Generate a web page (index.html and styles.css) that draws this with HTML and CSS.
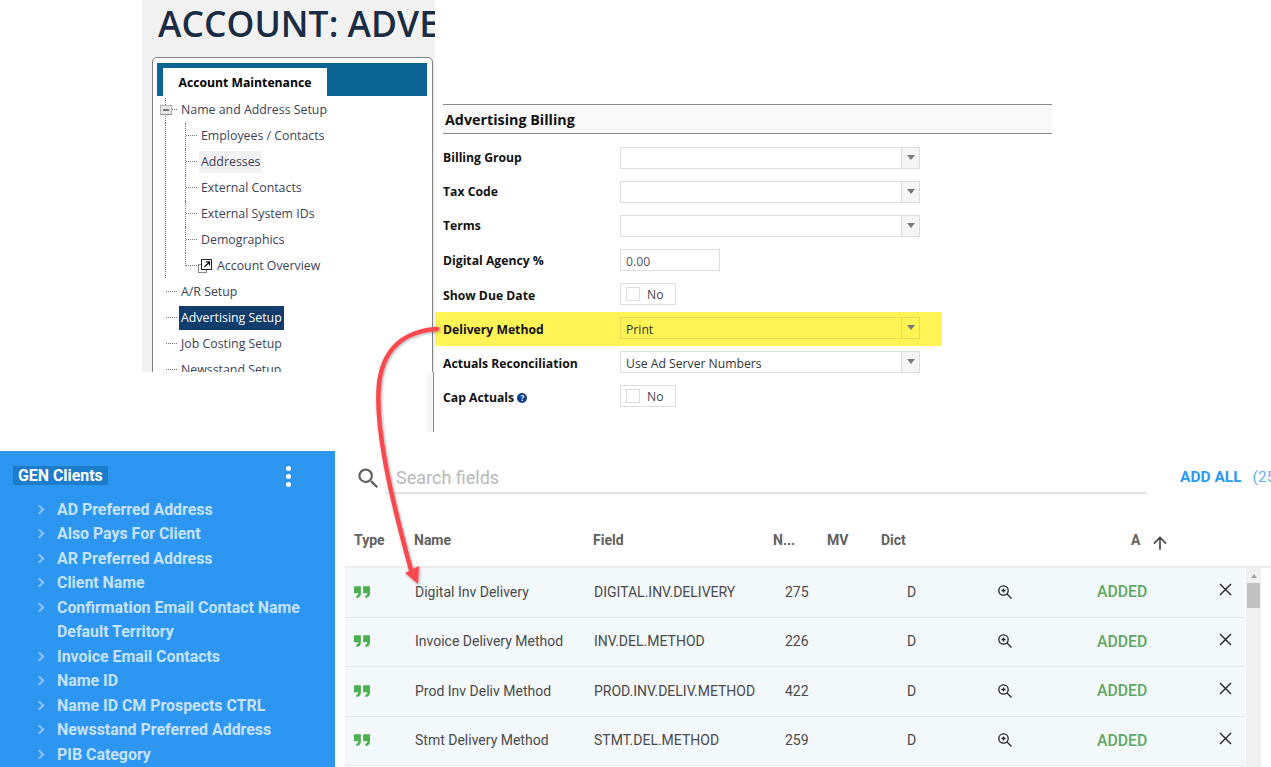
FILE: index.html
```html
<!DOCTYPE html>
<html lang="en">

<head>
    <meta charset="UTF-8">
    <title>Account: Advertising Setup</title>
    <link rel="stylesheet" href="styles.css">
</head>

<body>
    <!-- old account screen, top left of the collage -->
    <section class="account-shot">
        <h1 class="account-title">ACCOUNT: ADVERTISING</h1>
        <div class="tree-panel">
            <div class="tab-bar"><span class="tab">Account Maintenance</span></div>
            <ul class="tree">
                <li class="root open"><span class="expander"></span><a>Name and Address Setup</a></li>
                <li class="leaf"><a>Employees / Contacts</a></li>
                <li class="leaf"><a class="hover">Addresses</a></li>
                <li class="leaf"><a>External Contacts</a></li>
                <li class="leaf"><a>External System IDs</a></li>
                <li class="leaf"><a>Demographics</a></li>
                <li class="leaf last">
                    <svg class="popout" width="14" height="14" viewBox="0 0 14 14">
                        <rect x="0.5" y="5.5" width="8" height="8" fill="#fff" stroke="#888" />
                        <rect x="3.5" y="0.5" width="10" height="10" fill="#fff" stroke="#222" />
                        <path d="M6.5 8l4.5-4.5M7.8 2.8h3.7v3.7" fill="none" stroke="#111" stroke-width="1.2" />
                    </svg>
                    <a>Account Overview</a>
                </li>
                <li class="root"><a>A/R Setup</a></li>
                <li class="root"><a class="selected">Advertising Setup</a></li>
                <li class="root"><a>Job Costing Setup</a></li>
                <li class="root"><a>Newsstand Setup</a></li>
            </ul>
        </div>
    </section>

    <section class="billing-form">
        <h2 class="form-title">Advertising Billing</h2>
        <div class="form-row upper">
            <label>Billing Group</label>
            <div class="select"><span></span><i></i></div>
        </div>
        <div class="form-row upper">
            <label>Tax Code</label>
            <div class="select"><span></span><i></i></div>
        </div>
        <div class="form-row upper">
            <label>Terms</label>
            <div class="select"><span></span><i></i></div>
        </div>
        <div class="form-row">
            <label>Digital Agency %</label>
            <div class="number-input">0.00</div>
        </div>
        <div class="form-row lower">
            <label>Show Due Date</label>
            <div class="toggle"><b></b>No</div>
        </div>
        <div class="form-row lower highlight">
            <label>Delivery Method</label>
            <div class="select"><span>Print</span><i></i></div>
        </div>
        <div class="form-row lower">
            <label>Actuals Reconciliation</label>
            <div class="select"><span>Use Ad Server Numbers</span><i></i></div>
        </div>
        <div class="form-row lower">
            <label>Cap Actuals <em class="help">?</em></label>
            <div class="toggle"><b></b>No</div>
        </div>
    </section>
    <div class="pane-stub"></div>

    <!-- blue field tree -->
    <aside class="field-tree">
        <div class="field-head">
            <span class="field-group">GEN Clients</span>
            <span class="kebab"><i></i><i></i><i></i></span>
        </div>
        <ul class="field-list">
            <li class="has-kids">AD Preferred Address</li>
            <li class="has-kids">Also Pays For Client</li>
            <li class="has-kids">AR Preferred Address</li>
            <li class="has-kids">Client Name</li>
            <li class="has-kids">Confirmation Email Contact Name</li>
            <li>Default Territory</li>
            <li class="has-kids">Invoice Email Contacts</li>
            <li class="has-kids">Name ID</li>
            <li class="has-kids">Name ID CM Prospects CTRL</li>
            <li class="has-kids">Newsstand Preferred Address</li>
            <li class="has-kids">PIB Category</li>
        </ul>
    </aside>

    <!-- field picker -->
    <main class="picker">
        <div class="search-bar">
            <svg class="search-icon" width="27" height="27" viewBox="0 0 24 24">
                <path fill="#616161" d="M15.5 14h-.79l-.28-.27A6.47 6.47 0 0 0 16 9.5 6.5 6.5 0 1 0 9.5 16c1.61 0 3.09-.59 4.23-1.57l.27.28v.79l5 4.99L20.49 19l-4.99-5zm-6 0C7.01 14 5 11.99 5 9.5S7.01 5 9.5 5 14 7.01 14 9.5 11.99 14 9.5 14z" />
            </svg>
            <div class="search-field">Search fields</div>
            <div class="add-all"><b>ADD ALL</b><span>(25)</span></div>
        </div>

        <div class="grid-row grid-head">
            <span>Type</span>
            <span>Name</span>
            <span>Field</span>
            <span>N...</span>
            <span>MV</span>
            <span>Dict</span>
            <span></span>
            <span class="sort-col">A
                <svg width="20" height="20" viewBox="0 0 24 24">
                    <path fill="#444" d="M4 12l1.41 1.41L11 7.83V20h2V7.83l5.58 5.59L20 12l-8-8-8 8z" />
                </svg>
            </span>
        </div>

        <div class="grid-body">
            <div class="grid-rows">
                <div class="grid-row">
                    <svg class="quote" width="16" height="12" viewBox="5 7 14 10"><path d="M5.6 7H11v6.5c0 2-1.5 3.6-4 3.8v-2.1c1 0 1.6-.7 1.7-2H5.6a.6.6 0 0 1-.6-.6V7.6a.6.6 0 0 1 .6-.6zM13.6 7H19v6.5c0 2-1.5 3.6-4 3.8v-2.1c1 0 1.6-.7 1.7-2h-3.1a.6.6 0 0 1-.6-.6V7.6a.6.6 0 0 1 .6-.6z" /></svg>
                    <span class="name">Digital Inv Delivery</span>
                    <span class="name">DIGITAL.INV.DELIVERY</span>
                    <span class="num">275</span>
                    <span></span>
                    <span class="dict">D</span>
                    <svg class="zoom" width="16" height="16" viewBox="0 0 16 16"><circle cx="6.5" cy="6.5" r="4.7" /><path d="M10 10l4.5 4.5M4.5 6.5h4M6.5 4.5v4" /></svg>
                    <span class="added">ADDED</span>
                    <svg class="remove" width="13" height="13" viewBox="0 0 13 13"><path d="M1 1l11 11M12 1L1 12" /></svg>
                </div>
                <div class="grid-row">
                    <svg class="quote" width="16" height="12" viewBox="5 7 14 10"><path d="M5.6 7H11v6.5c0 2-1.5 3.6-4 3.8v-2.1c1 0 1.6-.7 1.7-2H5.6a.6.6 0 0 1-.6-.6V7.6a.6.6 0 0 1 .6-.6zM13.6 7H19v6.5c0 2-1.5 3.6-4 3.8v-2.1c1 0 1.6-.7 1.7-2h-3.1a.6.6 0 0 1-.6-.6V7.6a.6.6 0 0 1 .6-.6z" /></svg>
                    <span class="name">Invoice Delivery Method</span>
                    <span class="name">INV.DEL.METHOD</span>
                    <span class="num">226</span>
                    <span></span>
                    <span class="dict">D</span>
                    <svg class="zoom" width="16" height="16" viewBox="0 0 16 16"><circle cx="6.5" cy="6.5" r="4.7" /><path d="M10 10l4.5 4.5M4.5 6.5h4M6.5 4.5v4" /></svg>
                    <span class="added">ADDED</span>
                    <svg class="remove" width="13" height="13" viewBox="0 0 13 13"><path d="M1 1l11 11M12 1L1 12" /></svg>
                </div>
                <div class="grid-row">
                    <svg class="quote" width="16" height="12" viewBox="5 7 14 10"><path d="M5.6 7H11v6.5c0 2-1.5 3.6-4 3.8v-2.1c1 0 1.6-.7 1.7-2H5.6a.6.6 0 0 1-.6-.6V7.6a.6.6 0 0 1 .6-.6zM13.6 7H19v6.5c0 2-1.5 3.6-4 3.8v-2.1c1 0 1.6-.7 1.7-2h-3.1a.6.6 0 0 1-.6-.6V7.6a.6.6 0 0 1 .6-.6z" /></svg>
                    <span class="name">Prod Inv Deliv Method</span>
                    <span class="name">PROD.INV.DELIV.METHOD</span>
                    <span class="num">422</span>
                    <span></span>
                    <span class="dict">D</span>
                    <svg class="zoom" width="16" height="16" viewBox="0 0 16 16"><circle cx="6.5" cy="6.5" r="4.7" /><path d="M10 10l4.5 4.5M4.5 6.5h4M6.5 4.5v4" /></svg>
                    <span class="added">ADDED</span>
                    <svg class="remove" width="13" height="13" viewBox="0 0 13 13"><path d="M1 1l11 11M12 1L1 12" /></svg>
                </div>
                <div class="grid-row">
                    <svg class="quote" width="16" height="12" viewBox="5 7 14 10"><path d="M5.6 7H11v6.5c0 2-1.5 3.6-4 3.8v-2.1c1 0 1.6-.7 1.7-2H5.6a.6.6 0 0 1-.6-.6V7.6a.6.6 0 0 1 .6-.6zM13.6 7H19v6.5c0 2-1.5 3.6-4 3.8v-2.1c1 0 1.6-.7 1.7-2h-3.1a.6.6 0 0 1-.6-.6V7.6a.6.6 0 0 1 .6-.6z" /></svg>
                    <span class="name">Stmt Delivery Method</span>
                    <span class="name">STMT.DEL.METHOD</span>
                    <span class="num">259</span>
                    <span></span>
                    <span class="dict">D</span>
                    <svg class="zoom" width="16" height="16" viewBox="0 0 16 16"><circle cx="6.5" cy="6.5" r="4.7" /><path d="M10 10l4.5 4.5M4.5 6.5h4M6.5 4.5v4" /></svg>
                    <span class="added">ADDED</span>
                    <svg class="remove" width="13" height="13" viewBox="0 0 13 13"><path d="M1 1l11 11M12 1L1 12" /></svg>
                </div>
            </div>
            <div class="scrollbar"><i class="scroll-up"></i><i class="scroll-thumb"></i></div>
        </div>
    </main>

    <!-- red arrow drawn over the screenshots -->
    <svg class="callout" width="1271" height="767" viewBox="0 0 1271 767">
        <defs>
            <filter id="arrow-shadow" x="-30%" y="-10%" width="160%" height="120%">
                <feDropShadow dx="1" dy="1" stdDeviation="1.5" flood-color="#000" flood-opacity="0.35" />
            </filter>
        </defs>
        <g filter="url(#arrow-shadow)">
            <path d="M437 329C405 331 383 348 379 384C375 425 389 490 411 570" fill="none" stroke="#f9494f" stroke-width="4.5" stroke-linecap="round" />
            <path d="M405 573L419 566L418 584Z" fill="#f9494f" />
        </g>
    </svg>
</body>

</html>
```

FILE: styles.css
```css
html,
body {
    margin: 0;
    padding: 0;
    height: 767px;
    overflow: hidden;
    background-color: #fff;
}

ul {
    list-style: none;
    margin: 0;
    padding: 0;
}

/* the page is a collage of screenshots, so each piece sits on the canvas */
.account-shot,
.billing-form,
.pane-stub,
.field-tree,
.picker,
.callout {
    position: absolute;
}

.account-shot {
    left: 142px;
    top: 0;
    width: 293px;
    height: 372px;
    overflow: hidden;
    background-color: #f1f1f1;
    font-family: "Open Sans", sans-serif;
}

.account-title {
    margin: 0;
    padding-left: 16px;
    height: 57px;
    line-height: 46px;
    font-size: 35.5px;
    font-weight: 600;
    white-space: nowrap;
    color: #1b2d45;
    text-shadow: 1px 1px 0 #fff;
}

.tree-panel {
    margin-left: 10px;
    width: 270px;
    height: 330px;
    padding: 5px 5px 0 4px;
    background-color: #fff;
    border: 1px solid #808080;
    border-radius: 5px 5px 0 0;
}

.tab-bar {
    height: 33px;
    width: 270px;
    padding: 5px 0 0 6px;
    box-sizing: border-box;
    background-color: #0c6494;
}

.tab {
    display: block;
    width: 164px;
    height: 28px;
    line-height: 29px;
    text-align: center;
    background-color: #fff;
    font-size: 12.2px;
    font-weight: 700;
    color: #000;
}

.tree {
    padding-top: 1px;
    margin-left: -4px;
    font-size: 12.35px;
    color: #3c3f56;
}

.tree li {
    position: relative;
    height: 26px;
    line-height: 26px;
}

.tree a {
    display: inline-block;
    height: 22px;
    line-height: 22px;
    padding: 0 2px;
}

.tree .root {
    padding-left: 26px;
}

.tree .leaf {
    padding-left: 46px;
}

.tree .root::before,
.tree .leaf::before {
    content: "";
    position: absolute;
    top: 12px;
    height: 0;
    border-top: 1px dotted #777;
}

.tree .root::before {
    left: 13px;
    width: 11px;
}

.tree .leaf::before {
    left: 33px;
    width: 11px;
}

/* dotted verticals */
.tree .leaf::after {
    content: "";
    position: absolute;
    left: 32px;
    top: 0;
    height: 26px;
    border-left: 1px dotted #777;
}

.tree .leaf.last::after {
    height: 13px;
}

.tree .leaf,
.tree .root.open {
    background-image: linear-gradient(#777 50%, transparent 50%);
    background-size: 1px 2px;
    background-repeat: repeat-y;
    background-position: 12px 0;
}

.tree .root.open {
    background-position: 12px 17px;
}

.tree .leaf.last {
    padding-left: 62px;
}

.tree a.hover {
    background-color: #f1f1f1;
}

.tree a.selected {
    background-color: #103d6b;
    color: #fff;
    height: 24px;
    line-height: 24px;
}

.expander {
    position: absolute;
    left: 7px;
    top: 8px;
    width: 10px;
    height: 8px;
    z-index: 1;
    background-color: #e6e6e6;
    border: 1px solid #b5b5b5;
    border-bottom-color: #888;
}

.expander::after {
    content: "";
    display: block;
    margin: 3px 2px 0;
    height: 2px;
    background-color: #777;
}

.popout {
    position: absolute;
    left: 45px;
    top: 6px;
}

.pane-stub {
    left: 427px;
    top: 372px;
    width: 6px;
    height: 60px;
    background-color: #f6f6f6;
    border-right: 1px solid #888;
}

.billing-form {
    left: 433px;
    top: 100px;
    width: 619px;
    height: 332px;
    font-family: "Open Sans", sans-serif;
    font-size: 12.2px;
}

.form-title {
    margin: 4px 0 7px 10px;
    height: 30px;
    line-height: 29px;
    padding-left: 2px;
    box-sizing: border-box;
    background-color: #f8f8f8;
    border-top: 1px solid #8c8c8c;
    border-bottom: 1px solid #8c8c8c;
    font-size: 14.3px;
    font-weight: 700;
    color: #111;
}

.form-row {
    display: grid;
    grid-template-columns: 177px 300px;
    align-items: center;
    width: 507px;
    height: 34px;
    padding-left: 8px;
    margin-left: 2px;
    box-sizing: border-box;
}

.form-row label {
    font-weight: 700;
    color: #111;
}

/* labels drift a little against the boxes in the screenshot */
.form-row.upper label {
    padding-bottom: 2px;
}

.form-row.lower label {
    padding-top: 2px;
}

.form-row.highlight {
    background: linear-gradient(transparent 1px, #fff455 1px);
    box-shadow: 0 1px 0 #fff455;
}

.select,
.number-input,
.toggle {
    height: 22px;
    line-height: 23px;
    box-sizing: border-box;
    border: 1px solid #ddd;
    background-color: #fff;
    color: #333;
}

.select {
    display: flex;
}

.select span {
    flex: 1;
    padding-left: 5px;
}

.select i {
    position: relative;
    width: 17px;
    background-color: #f5f5f5;
    border-left: 1px solid #ddd;
}

.select i::after {
    content: "";
    position: absolute;
    left: 5px;
    top: 7px;
    border-left: 4px solid transparent;
    border-right: 4px solid transparent;
    border-top: 5px solid #777;
}

.highlight .select {
    border-color: #e4dc55;
    background-color: #fff455;
}

.highlight .select i {
    background-color: #fff455;
    border-left-color: #e4dc55;
}

.number-input {
    width: 100px;
    padding-left: 5px;
    color: #555;
}

.toggle {
    display: flex;
    align-items: center;
    gap: 7px;
    width: 56px;
    padding-left: 5px;
    color: #444;
}

.toggle b {
    width: 12px;
    height: 12px;
    border: 1px solid #ddd;
}

.help {
    display: inline-block;
    width: 10px;
    height: 10px;
    line-height: 10px;
    margin-left: 0;
    border-radius: 50%;
    background-color: #0f3c90;
    color: #fff;
    font-size: 8px;
    font-style: normal;
    text-align: center;
    vertical-align: 1px;
}

.field-tree {
    left: 0;
    top: 451px;
    width: 335px;
    height: 316px;
    overflow: hidden;
    background-color: #2c96f1;
    font-family: Roboto, sans-serif;
    font-size: 15.9px;
    font-weight: 700;
}

.field-head {
    display: flex;
    justify-content: space-between;
    padding: 15px 44px 0 13px;
    height: 46px;
    box-sizing: border-box;
}

.field-group {
    height: 19px;
    line-height: 19px;
    padding: 0 5px;
    background-color: #1e7ccd;
    color: #fff;
}

.kebab {
    display: flex;
    flex-direction: column;
    gap: 3px;
}

.kebab i {
    width: 5px;
    height: 5px;
    border-radius: 50%;
    background-color: #fff;
}

.field-list {
    padding: 0.5px 0 0 57px;
    color: #c6e2fb;
}

.field-list li {
    position: relative;
    height: 24.5px;
    line-height: 24.5px;
    white-space: nowrap;
}

.field-list .has-kids::before {
    content: "";
    position: absolute;
    left: -21px;
    top: 8px;
    width: 5px;
    height: 5px;
    border-top: 2px solid #8cc3f4;
    border-right: 2px solid #8cc3f4;
    transform: rotate(45deg);
}

.picker {
    left: 345px;
    top: 451px;
    width: 926px;
    height: 316px;
    overflow: hidden;
    font-family: Roboto, sans-serif;
}

.search-bar {
    display: flex;
    height: 80px;
    padding-left: 10px;
}

.search-icon {
    margin: 14px 4px 0 0;
    flex: none;
}

.search-field {
    flex: none;
    width: 761px;
    height: 43px;
    line-height: 54px;
    box-sizing: border-box;
    padding-left: 10px;
    border-bottom: 2px solid #e4e4e4;
    font-size: 18px;
    color: #b8b8b8;
}

.add-all {
    display: flex;
    gap: 11px;
    margin-left: 33px;
    padding-top: 17px;
    font-size: 15.5px;
    line-height: 18px;
    white-space: nowrap;
    color: #5fb0f5;
}

.add-all b {
    color: #2b9af3;
    font-weight: 700;
}

.grid-row {
    display: grid;
    grid-template-columns: 69px 179px 180px 54px 54px 117px 99px 122px 26px;
    align-items: center;
}

.grid-head {
    height: 35px;
    grid-template-rows: 18px;
    align-items: start;
    line-height: 18px;
    font-size: 14px;
    font-weight: 700;
    color: #616161;
}

.grid-head span:first-child {
    padding-left: 9px;
}

.sort-col {
    display: flex;
    align-items: flex-start;
    gap: 10px;
    padding-left: 34px;
}

.sort-col svg {
    flex: none;
    margin-top: 2px;
}

.grid-body {
    display: flex;
    border-top: 2px solid #ececec;
}

.grid-rows {
    width: 900px;
    flex: none;
}

.grid-rows .grid-row {
    height: 49.5px;
    padding-bottom: 1px;
    box-sizing: border-box;
    background-color: #f3f8fb;
    border-bottom: 1px solid #e2e7ea;
    font-size: 14px;
    color: #4a4a4a;
}

.quote {
    margin-left: 9px;
    fill: #4caf50;
}

.name {
    padding-left: 1px;
    white-space: nowrap;
}

.num {
    padding-left: 12px;
}

.dict {
    padding-left: 26px;
}

.zoom {
    margin-left: -1px;
    fill: none;
    stroke: #222;
    stroke-width: 1.3;
}

.added {
    font-size: 15.8px;
    font-weight: 500;
    color: #5fa864;
}

.remove {
    margin-bottom: 4px;
    fill: none;
    stroke: #222;
    stroke-width: 1.4;
}

.scrollbar {
    display: flex;
    flex-direction: column;
    align-items: center;
    width: 15px;
    margin-left: 1px;
    height: 250px;
    background-color: #f0f0f0;
}

.scroll-up {
    margin: 6px 0 5px;
    border-left: 3px solid transparent;
    border-right: 3px solid transparent;
    border-bottom: 4px solid #a3a3a3;
}

.scroll-thumb {
    width: 13px;
    height: 25px;
    background-color: #c1c1c1;
}

.callout {
    left: 0;
    top: 0;
    pointer-events: none;
}
```
